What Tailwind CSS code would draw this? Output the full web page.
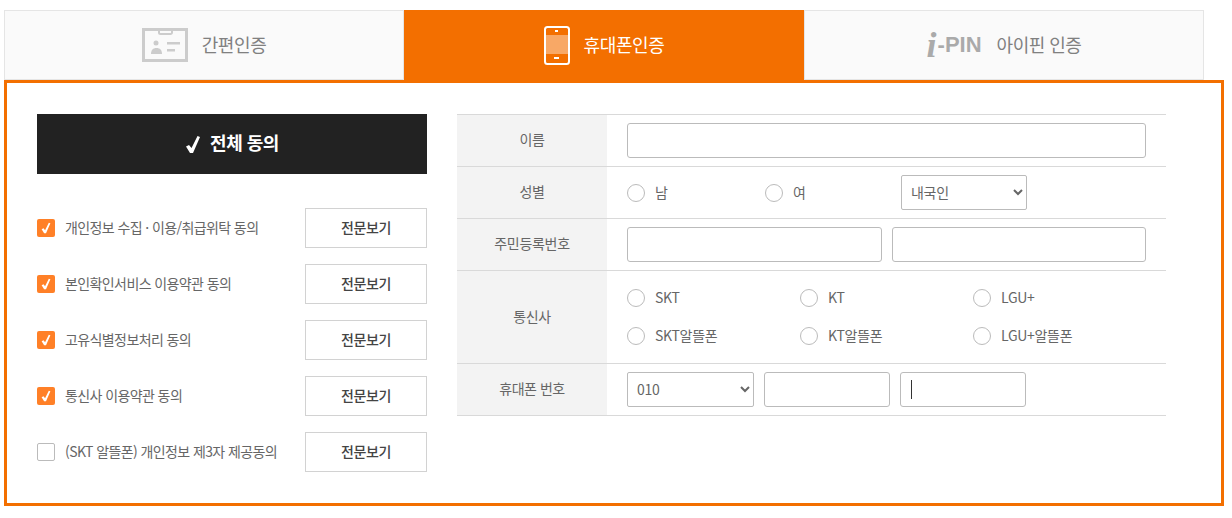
<!DOCTYPE html>
<html lang="ko">
<head>
    <meta charset="UTF-8">
    <title>휴대폰인증</title>
    <script src="https://cdn.jsdelivr.net/npm/@tailwindcss/browser@4"></script>
</head>
<body class="bg-white font-['Noto_Sans_CJK_KR','Noto_Sans',sans-serif] overflow-hidden">
    <div class="w-[1232px] h-[518px] pt-[10px] pl-[4px]">
        <!-- Tabs -->
        <div class="flex h-[70px] w-[1200px]">
            <a class="w-[400px] flex items-center justify-center gap-[14px] bg-[#fafafa] border border-[#e5e5e5] text-[18px] tracking-[-0.4px] text-[#808080]">
                <svg width="46" height="36" viewBox="0 0 46 36" fill="none">
                    <rect x="1.500" y="2.500" width="43" height="31" stroke="#ccc" stroke-width="3"/>
                    <path d="M17 3v2.500a1.500 1.500 0 0 0 1.500 1.500h10a1.500 1.500 0 0 0 1.500-1.500V3" stroke="#ccc" stroke-width="2"/>
                    <circle cx="14" cy="16" r="2.500" fill="#ccc"/>
                    <path d="M9 27c0-4 2-6 5.500-6s5.500 2 5.500 6Z" fill="#ccc"/>
                    <rect x="25" y="15" width="13" height="2.500" fill="#ccc"/>
                    <rect x="25" y="22" width="8" height="2.500" fill="#ccc"/>
                </svg>
                <span class="pb-[2px]">간편인증</span>
            </a>
            <a class="w-[400px] flex items-center justify-center gap-[14px] bg-[#f36f00] text-[18px] tracking-[-0.4px] text-white">
                <svg width="26" height="39" viewBox="0 0 26 39" fill="none">
                    <rect x="1" y="1" width="24" height="37" rx="2.500" stroke="#fff" stroke-width="2"/>
                    <rect x="2" y="9" width="22" height="19" fill="#fff" fill-opacity="0.4"/>
                    <rect x="11" y="4" width="3" height="2" fill="#fff"/>
                    <rect x="10" y="31" width="5" height="2" fill="#fff"/>
                </svg>
                <span class="pb-[2px]">휴대폰인증</span>
            </a>
            <a class="w-[400px] flex items-center justify-center gap-[15px] bg-[#fafafa] border border-[#e5e5e5] text-[18px] tracking-[-0.5px] text-[#808080]">
                <span class="flex items-center text-[#aaa] leading-none tracking-normal">
                    <span class="font-['Liberation_Serif',serif] italic font-bold text-[36px] w-[11px] pb-[1px]">i</span>
                    <span class="font-['Liberation_Sans',sans-serif] font-bold text-[22px]">-PIN</span>
                </span>
                <span class="pb-[2px]">아이핀 인증</span>
            </a>
        </div>

        <!-- Content box -->
        <div class="w-[1220px] h-[426px] border-[3px] border-[#f36f00] pt-[31px] pl-[30px] flex gap-[30px]">
            <!-- Agreements -->
            <div class="w-[390px]">
                <button class="w-full h-[60px] bg-[#222] text-white font-bold text-[18px] tracking-[-0.5px] flex items-center justify-center gap-[9px]">
                    <svg width="16" height="19" viewBox="0 0 16 18"><path d="M1 11L4 9.500L6.500 12.500L12.500 0.500L15 1.500L8 17.500H5Z" fill="#fff"/></svg>
                    <span class="pb-[4px]">전체 동의</span>
                </button>
                <div class="mt-[34px] flex flex-col gap-[16px]">
                    <div class="h-[40px] flex items-center justify-between">
                        <label class="flex items-center gap-[10px] text-[14px] tracking-[-0.6px] text-[#666]">
                            <span class="w-[18px] h-[18px] rounded-[2px] bg-[#ff8027] flex items-center justify-center">
                                <svg width="10" height="12" viewBox="0 0 16 18"><path d="M1 11L4 9.500L6.500 12.500L12.500 0.500L15 1.500L8 17.500H5Z" fill="#fff"/></svg>
                            </span>
                            <span class="pb-[2px]">개인정보 수집 · 이용/취급위탁 동의</span>
                        </label>
                        <button class="w-[122px] h-[40px] border border-[#d2d2d2] text-[14px] tracking-[-0.4px] font-medium text-[#444] pb-[2px]">전문보기</button>
                    </div>
                    <div class="h-[40px] flex items-center justify-between">
                        <label class="flex items-center gap-[10px] text-[14px] tracking-[-0.6px] text-[#666]">
                            <span class="w-[18px] h-[18px] rounded-[2px] bg-[#ff8027] flex items-center justify-center">
                                <svg width="10" height="12" viewBox="0 0 16 18"><path d="M1 11L4 9.500L6.500 12.500L12.500 0.500L15 1.500L8 17.500H5Z" fill="#fff"/></svg>
                            </span>
                            <span class="pb-[2px]">본인확인서비스 이용약관 동의</span>
                        </label>
                        <button class="w-[122px] h-[40px] border border-[#d2d2d2] text-[14px] tracking-[-0.4px] font-medium text-[#444] pb-[2px]">전문보기</button>
                    </div>
                    <div class="h-[40px] flex items-center justify-between">
                        <label class="flex items-center gap-[10px] text-[14px] tracking-[-0.6px] text-[#666]">
                            <span class="w-[18px] h-[18px] rounded-[2px] bg-[#ff8027] flex items-center justify-center">
                                <svg width="10" height="12" viewBox="0 0 16 18"><path d="M1 11L4 9.500L6.500 12.500L12.500 0.500L15 1.500L8 17.500H5Z" fill="#fff"/></svg>
                            </span>
                            <span class="pb-[2px]">고유식별정보처리 동의</span>
                        </label>
                        <button class="w-[122px] h-[40px] border border-[#d2d2d2] text-[14px] tracking-[-0.4px] font-medium text-[#444] pb-[2px]">전문보기</button>
                    </div>
                    <div class="h-[40px] flex items-center justify-between">
                        <label class="flex items-center gap-[10px] text-[14px] tracking-[-0.6px] text-[#666]">
                            <span class="w-[18px] h-[18px] rounded-[2px] bg-[#ff8027] flex items-center justify-center">
                                <svg width="10" height="12" viewBox="0 0 16 18"><path d="M1 11L4 9.500L6.500 12.500L12.500 0.500L15 1.500L8 17.500H5Z" fill="#fff"/></svg>
                            </span>
                            <span class="pb-[2px]">통신사 이용약관 동의</span>
                        </label>
                        <button class="w-[122px] h-[40px] border border-[#d2d2d2] text-[14px] tracking-[-0.4px] font-medium text-[#444] pb-[2px]">전문보기</button>
                    </div>
                    <div class="h-[40px] flex items-center justify-between">
                        <label class="flex items-center gap-[10px] text-[14px] tracking-[-0.6px] text-[#666]">
                            <span class="w-[18px] h-[18px] rounded-[2px] border border-[#bbb] bg-white"></span>
                            <span class="pb-[2px]">(SKT 알뜰폰) 개인정보 제3자 제공동의</span>
                        </label>
                        <button class="w-[122px] h-[40px] border border-[#d2d2d2] text-[14px] tracking-[-0.4px] font-medium text-[#444] pb-[2px]">전문보기</button>
                    </div>
                </div>
            </div>

            <!-- Form table -->
            <div class="w-[709px] text-[14px] tracking-[-0.3px] text-[#666]">
                <div class="flex h-[53px] border-y border-[#d9d9d9]">
                    <div class="w-[150px] bg-[#f3f3f3] flex items-center justify-center pb-[2px]">이름</div>
                    <div class="flex-1 pl-[20px] flex items-center">
                        <input type="text" class="w-[519px] h-[35px] border border-[#bbb] rounded-[3px] bg-white">
                    </div>
                </div>
                <div class="flex h-[52px] border-b border-[#d9d9d9]">
                    <div class="w-[150px] bg-[#f3f3f3] flex items-center justify-center pb-[2px]">성별</div>
                    <div class="flex-1 pl-[20px] flex items-center">
                        <label class="w-[138px] flex items-center gap-[10px] leading-[18px]"><span class="w-[18px] h-[18px] rounded-full border border-[#bbb]"></span><span class="pb-[2px]">남</span></label>
                        <label class="w-[136px] flex items-center gap-[10px] leading-[18px]"><span class="w-[18px] h-[18px] rounded-full border border-[#bbb]"></span><span class="pb-[2px]">여</span></label>
                        <select class="w-[126px] h-[35px] border border-[#bbb] rounded-[2px] bg-white pl-[5px] pb-[1px]"><option>내국인</option></select>
                    </div>
                </div>
                <div class="flex h-[52px] border-b border-[#d9d9d9]">
                    <div class="w-[150px] bg-[#f3f3f3] flex items-center justify-center pb-[2px]">주민등록번호</div>
                    <div class="flex-1 pl-[20px] flex items-center gap-[10px]">
                        <input type="text" class="w-[255px] h-[35px] border border-[#bbb] rounded-[3px] bg-white">
                        <input type="password" class="w-[254px] h-[35px] border border-[#bbb] rounded-[3px] bg-white">
                    </div>
                </div>
                <div class="flex h-[93px] border-b border-[#d9d9d9]">
                    <div class="w-[150px] bg-[#f3f3f3] flex items-center justify-center pb-[2px]">통신사</div>
                    <div class="flex-1 pl-[20px] grid grid-cols-[173px_173px_173px] content-center gap-y-[20px]">
                        <label class="h-[18px] flex items-center gap-[10px]"><span class="w-[18px] h-[18px] rounded-full border border-[#bbb]"></span><span class="pb-[1px]">SKT</span></label>
                        <label class="h-[18px] flex items-center gap-[10px]"><span class="w-[18px] h-[18px] rounded-full border border-[#bbb]"></span><span class="pb-[1px]">KT</span></label>
                        <label class="h-[18px] flex items-center gap-[10px]"><span class="w-[18px] h-[18px] rounded-full border border-[#bbb]"></span><span class="pb-[1px]">LGU+</span></label>
                        <label class="h-[18px] flex items-center gap-[10px]"><span class="w-[18px] h-[18px] rounded-full border border-[#bbb]"></span><span class="pb-[1px]">SKT알뜰폰</span></label>
                        <label class="h-[18px] flex items-center gap-[10px]"><span class="w-[18px] h-[18px] rounded-full border border-[#bbb]"></span><span class="pb-[1px]">KT알뜰폰</span></label>
                        <label class="h-[18px] flex items-center gap-[10px]"><span class="w-[18px] h-[18px] rounded-full border border-[#bbb]"></span><span class="pb-[1px]">LGU+알뜰폰</span></label>
                    </div>
                </div>
                <div class="flex h-[52px] border-b border-[#d9d9d9]">
                    <div class="w-[150px] bg-[#f3f3f3] flex items-center justify-center pb-[2px] tracking-[-0.5px]">휴대폰 번호</div>
                    <div class="flex-1 pl-[20px] flex items-center gap-[10px]">
                        <select class="w-[127px] h-[35px] border border-[#bbb] rounded-[2px] bg-white pl-[5px] pb-[1px]"><option>010</option></select>
                        <input type="text" class="w-[126px] h-[35px] border border-[#bbb] rounded-[3px] bg-white">
                        <div class="relative w-[126px] h-[35px] border border-[#bbb] rounded-[3px] bg-white">
                            <span class="absolute left-[10px] top-[7px] w-px h-[19px] bg-[#333]"></span>
                        </div>
                    </div>
                </div>
            </div>
        </div>
    </div>
</body>
</html>
